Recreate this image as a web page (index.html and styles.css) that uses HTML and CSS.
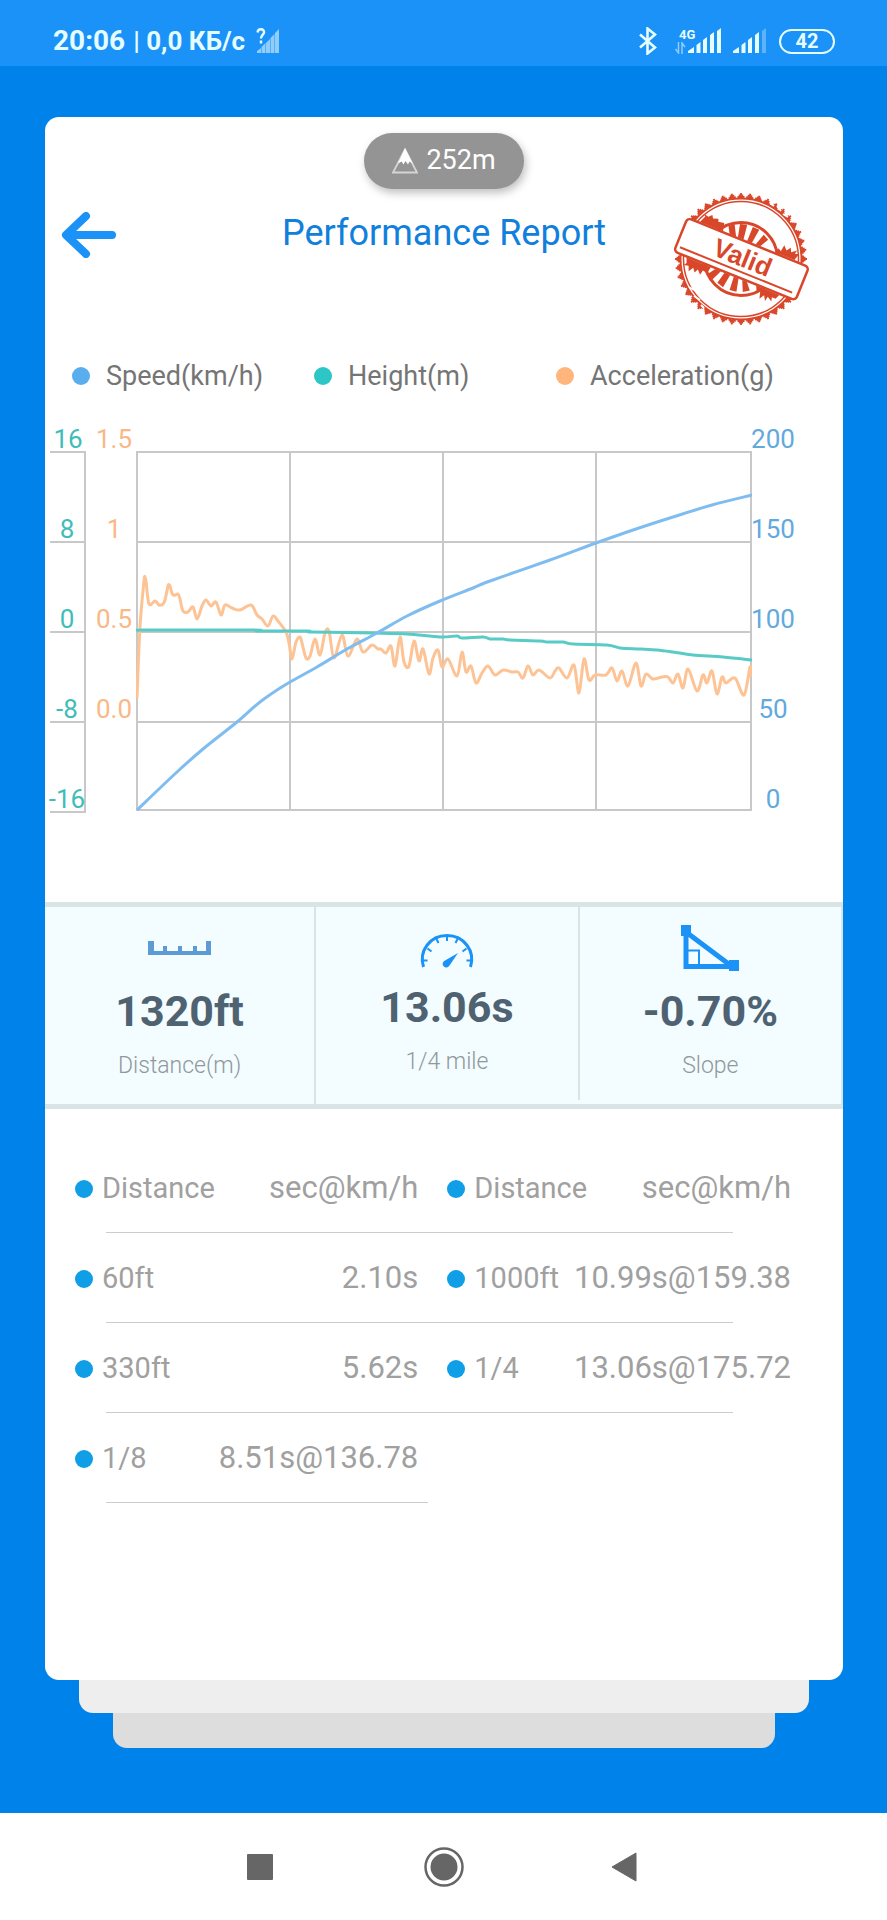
FILE: index.html
```
<!DOCTYPE html>
<html lang="en">
<head>
<meta charset="UTF-8">
<meta name="viewport" content="width=device-width, initial-scale=1.0">
<title>Performance Report</title>
<link rel="stylesheet" href="styles.css">
</head>
<body>
  <div class="statusbar">
    <div class="status-left">
      <span class="clock">20:06</span>
      <span class="traffic">| 0,0 КБ/с</span>
      <svg class="no-sim" width="24" height="26" viewBox="0 0 24 26">
        <path d="M1 25v-2l4-3v5zM5.500 25v-6l4-4v10zM10 25V15l4-4v14zM14.500 25V10l4-4v19zM19 25V5l4-4v24z" fill="#8fcdfb"/>
        <path d="M1.500 4.500C2 0 8.500 0.500 8 4.500C7.500 7 5 7 5 10.500M5 12.500v3" fill="none" stroke="#e6fdff" stroke-width="2.400"/>
      </svg>
    </div>
    <div class="status-right">
      <svg width="18" height="28" viewBox="0 0 18 28">
        <path d="M1 7.500l15 13-7.500 6V1.500l7.500 6L1 20.500" fill="none" stroke="#e6fdff" stroke-width="2.600"/>
      </svg>
      <div class="mobile">
        <div class="mobile-type">
          <span>4G</span>
          <svg width="11" height="12" viewBox="0 0 11 12">
            <path d="M3.500 0v11L0.500 7M7 12V1l3 4" fill="none" stroke="#8fcdfb" stroke-width="1.500"/>
          </svg>
        </div>
        <svg width="34" height="26" viewBox="0 0 34 26">
          <path d="M0 25v-2l6-4v6zM8.500 25v-8l4-3v11zM15 25V12l4-3v16zM22 25V7l4-3v21zM29 25V3l4-3v25z" fill="#e6fdff"/>
        </svg>
      </div>
      <svg width="34" height="26" viewBox="0 0 34 26">
        <path d="M0 25v-2l6-4v6zM8.500 25v-8l4-3v11zM15 25V12l4-3v16zM22 25V7l4-3v21z" fill="#e6fdff"/>
        <path d="M29 25V3l4-3v25z" fill="#5fb4f9"/>
      </svg>
      <span class="battery">42</span>
    </div>
  </div>

  <main>
    <div class="card">
      <div class="altitude">
        <svg width="26" height="26" viewBox="0 0 26 26">
          <path d="M13 1.500L25 24.500H1z" fill="none" stroke="#d5d5d5" stroke-width="1.800"/>
          <path d="M13 0l7.500 15-3-1.500-1.500 3-2.500-3.500-2 3.500-2-3-3.500 2z" fill="#fff"/>
        </svg>
        <span>252m</span>
      </div>

      <header>
        <button class="back" aria-label="Back">
          <svg width="56" height="46" viewBox="0 0 56 46">
            <path d="M25 4L5 23l20 19M7 23h44" fill="none" stroke="#1a92f7" stroke-width="8" stroke-linecap="round" stroke-linejoin="round"/>
          </svg>
        </button>
        <h1>Performance Report</h1>
        <svg class="stamp" width="140" height="140" viewBox="0 0 140 140">
          <g fill="none" stroke="#d9472b">
            <circle cx="70" cy="70" r="62" stroke-width="2" pathLength="440" stroke-dasharray="8 2" stroke-dashoffset="4"/>
            <circle cx="70" cy="70" r="63.500" stroke-width="2" pathLength="440" stroke-dasharray="5 5" stroke-dashoffset="2.500"/>
            <circle cx="70" cy="70" r="65" stroke-width="2" pathLength="440" stroke-dasharray="2 8" stroke-dashoffset="1"/>
            <circle cx="70" cy="70" r="60.500" stroke-width="2"/>
            <circle cx="70" cy="70" r="57.500" stroke-width="1.500"/>
            <circle cx="70" cy="70" r="36.500" stroke-width="3"/>
          </g>
          <g transform="translate(70 70) rotate(22)">
            <g fill="#d9472b">
              <path d="M-20-19l-4-7 5-4 6 11zM-11-19l-3-13 7-2 2 15zM-1-19l0-15 7 0-2 15zM8-19l4-12 6 3-5 9z"/>
              <path d="M-20 19l-5 7 6 4 5-11zM-10 19l-3 12 7 2 2-14zM0 19l1 14 7-1-3-13zM9 19l5 11 6-4-6-7z"/>
              <path d="M-52-19l3-7-2-2 5 1 3-3 2 3 5-2 1 3 6-1 2 8zM29-19l2-5 3 2 1-7 4 4 3-4 2 4 5-4-1 4 4-1-2 7z"/>
              <path d="M-51 19l2 5-2 3 5-1 2 5 3-5 3 4 2-4 4 4 1-5 5 1 1-7zM24 19l3 6 3-2 2 7 3-5 3 5 1-5 5 3-1-4 4 0 2-5z"/>
            </g>
            <rect x="-65" y="-18" width="131" height="36" rx="4" fill="#fff" stroke="#d9472b" stroke-width="2.500"/>
            <path d="M-61 12H60" stroke="#d9472b" stroke-width="2"/>
            <text x="1" y="7" text-anchor="middle" class="stamp-text">Valid</text>
          </g>
          <path d="M99 14l4 3M106 17l4 5M112 25l5 3M18 98l5 3M23 107l6 4M30 116l3 3" stroke="#fff" stroke-width="2"/>
        </svg>
      </header>

      <ul class="legend">
        <li><i class="dot speed"></i>Speed(km/h)</li>
        <li><i class="dot height"></i>Height(m)</li>
        <li><i class="dot accel"></i>Acceleration(g)</li>
      </ul>

      <div class="chart">
        <ul class="scale scale-height">
          <li>16</li>
          <li>8</li>
          <li>0</li>
          <li>-8</li>
          <li>-16</li>
        </ul>
        <ul class="scale scale-accel">
          <li>1.5</li>
          <li>1</li>
          <li>0.5</li>
          <li>0.0</li>
        </ul>
        <svg class="plot" viewBox="0 0 616 360" preserveAspectRatio="none">
          <path class="grid" d="M0 1H616M0 91H616M0 181H616M0 271H616M0 359H616M1 0V360M154 0V360M307 0V360M460 0V360M615 0V360"/>
          <path id="accelLine" class="line-accel"/>
          <path id="heightLine" class="line-height"/>
          <path id="speedLine" class="line-speed"/>
        </svg>
        <ul class="scale scale-speed">
          <li>200</li>
          <li>150</li>
          <li>100</li>
          <li>50</li>
          <li>0</li>
        </ul>
      </div>

      <section class="stats">
        <div class="stat stat-distance">
          <svg width="64" height="48" viewBox="0 0 64 48">
            <path d="M0 17h6v10h9v-5h4v5h11v-5h4v5h11v-5h4v5h9V17h5v14H0z" fill="#5c9bd4"/>
          </svg>
          <strong>1320ft</strong>
          <span>Distance(m)</span>
        </div>
        <div class="stat stat-time">
          <svg width="64" height="48" viewBox="0 0 64 48">
            <path d="M8.500 47C3.500 31 15 15.500 32 15.500S60.500 31 55.500 47" fill="none" stroke="#1a92f7" stroke-width="3"/>
            <path d="M32 16v5M21.500 19l2 4M42.500 19l-2 4M12.500 28.500l4 3M51.500 28.500l-4 3M8 40.500h4.500M56 40.500h-4.500" stroke="#1a92f7" stroke-width="2"/>
            <path d="M43 33L34.500 45.500a3.600 3.600 0 1 1-4.500-5z" fill="#1a92f7"/>
          </svg>
          <strong>13.06s</strong>
          <span>1/4 mile</span>
        </div>
        <div class="stat stat-slope">
          <svg width="64" height="48" viewBox="0 0 64 48">
            <path d="M8 26.500h13v16" fill="none" stroke="#1a92f7" stroke-width="2"/>
            <path d="M8 8v34.500h46z" fill="none" stroke="#1a92f7" stroke-width="5"/>
            <path d="M3 1h10v11H3zM51 36h10v11H51z" fill="#1a92f7"/>
          </svg>
          <strong>-0.70%</strong>
          <span>Slope</span>
        </div>
      </section>

      <table class="splits">
        <tr>
          <th class="name"><i class="dot"></i>Distance</th>
          <th class="value">sec@km/h</th>
          <th class="name"><i class="dot"></i>Distance</th>
          <th class="value">sec@km/h</th>
        </tr>
        <tr>
          <td class="name"><i class="dot"></i>60ft</td>
          <td class="value">2.10s</td>
          <td class="name"><i class="dot"></i>1000ft</td>
          <td class="value">10.99s@159.38</td>
        </tr>
        <tr>
          <td class="name"><i class="dot"></i>330ft</td>
          <td class="value">5.62s</td>
          <td class="name"><i class="dot"></i>1/4</td>
          <td class="value">13.06s@175.72</td>
        </tr>
        <tr class="half">
          <td class="name"><i class="dot"></i>1/8</td>
          <td class="value">8.51s@136.78</td>
          <td></td>
          <td></td>
        </tr>
      </table>
    </div>
    <div class="sheet sheet-1"></div>
    <div class="sheet sheet-2"></div>
  </main>

  <nav>
    <button aria-label="Recent apps">
      <svg width="40" height="40" viewBox="0 0 40 40"><rect x="7" y="7" width="26" height="26" rx="1" fill="#666"/></svg>
    </button>
    <button aria-label="Home">
      <svg width="40" height="40" viewBox="0 0 40 40">
        <circle cx="20" cy="20" r="18.500" fill="none" stroke="#666" stroke-width="2.500"/>
        <circle cx="20" cy="20" r="13.500" fill="#666"/>
      </svg>
    </button>
    <button aria-label="Back">
      <svg width="40" height="40" viewBox="0 0 40 40"><path d="M28 6v28L4 20z" fill="#666" stroke="#666" stroke-linejoin="round"/></svg>
    </button>
  </nav>

  <script>
    const accel = "1,247 4,176 8,130 9,127 10,130 13,153 19,150 23,154 27,153 29,149 32,135 33,134 34,135 37,144 42,143 44,148 47,160 52,161 57,156 61,168 66,155 70,149 75,155 80,151 85,164 89,154 96,157 104,159 115,154 121,164 126,168 132,175 137,165 142,170 150,181 153,192 156,208 160,191 164,186 166,192 170,207 174,205 179,188 184,204 189,182 193,180 198,207 206,184 212,205 221,188 227,201 236,194 242,198 245,198 250,202 255,195 259,215 264,186 268,211 273,215 278,190 283,210 287,198 293,223 297,207 302,199 306,216 312,208 321,225 326,201 330,221 335,215 340,232 346,222 352,215 359,224 367,219 376,221 382,221 387,227 392,215 397,224 403,219 414,227 419,220 423,217 431,227 438,214 443,242 448,208 453,229 459,224 470,224 476,217 481,230 486,220 492,235 500,212 505,235 510,223 517,228 526,226 532,226 537,232 542,223 547,237 552,218 561,240 567,224 571,232 576,220 581,243 586,226 590,232 599,227 608,244 614,216 615,226";
    const height = "1,180 7,179 117,179 122,180 171,180 176,181 237,182 271,183 304,186 321,185 326,187 347,186 354,188 367,188 374,189 404,190 411,191 427,191 437,193 471,194 484,197 504,198 521,199 537,201 557,204 587,206 616,209";
    const speed = "1,359 41,321 67,298 101,271 124,251 149,234 181,216 211,198 241,182 271,165 304,150 337,137 354,130 414,109 460,92 500,78 537,66 576,54 616,44";

    // rounded line through all the points
    function smoothPath(data) {
      const p = data.split(' ').map(s => s.split(',').map(Number));
      let d = 'M' + p[0];
      for (let i = 0; i < p.length - 1; i++) {
        const a = p[i - 1] || p[i];
        const b = p[i];
        const c = p[i + 1];
        const e = p[i + 2] || c;
        d += 'C' + [
          b[0] + (c[0] - a[0]) / 6, b[1] + (c[1] - a[1]) / 6,
          c[0] - (e[0] - b[0]) / 6, c[1] - (e[1] - b[1]) / 6,
          c[0], c[1]
        ];
      }
      return d;
    }

    document.getElementById('accelLine').setAttribute('d', smoothPath(accel));
    document.getElementById('heightLine').setAttribute('d', smoothPath(height));
    document.getElementById('speedLine').setAttribute('d', smoothPath(speed));
  </script>
</body>
</html>
```
FILE: styles.css
```
* {
  box-sizing: border-box;
}
body {
  margin: 0;
  min-height: 100vh;
  display: flex;
  flex-direction: column;
  font-family: Roboto, sans-serif;
  background-color: #0082eb;
}
ul {
  list-style: none;
  margin: 0;
  padding: 0;
}
svg {
  display: block;
}
button {
  padding: 0;
  border: none;
  background: none;
  cursor: pointer;
}

/* status bar */
.statusbar {
  display: flex;
  justify-content: space-between;
  height: 66px;
  padding: 16px 52px 0 53px;
  background-color: #1a92f7;
  color: #e6fdff;
}
.status-left,
.status-right {
  display: flex;
  align-items: center;
  height: 50px;
}
.clock,
.traffic {
  font-size: 28px;
  line-height: 32px;
  font-weight: bold;
}
.traffic {
  font-size: 26px;
  margin-left: 8px;
}
.no-sim {
  margin-left: 11px;
}
.mobile {
  display: flex;
  align-items: flex-end;
  margin: 0 11px 0 18px;
}
.mobile-type {
  font-size: 13px;
  line-height: 14px;
  font-weight: bold;
  margin-right: 2px;
}
.mobile-type span {
  display: block;
  width: 11px;
  padding-left: 4px;
}
.battery {
  width: 56px;
  height: 25px;
  margin-left: 12px;
  border: 2px solid #e6fdff;
  border-radius: 13px;
  font-size: 20px;
  line-height: 21px;
  font-weight: bold;
  text-align: center;
}

/* report card */
main {
  flex: 1;
  display: flex;
  flex-direction: column;
  padding: 51px 44px 65px 45px;
}
.card {
  flex: 1;
  padding-top: 16px;
  background-color: #fff;
  border-radius: 14px;
}
.sheet {
  border-radius: 0 0 14px 14px;
}
.sheet-1 {
  height: 33px;
  margin: 0 34px;
  background-color: #eee;
}
.sheet-2 {
  height: 35px;
  margin: 0 68px;
  background-color: #ddd;
}
.altitude {
  display: flex;
  align-items: center;
  justify-content: center;
  gap: 8px;
  width: 160px;
  height: 56px;
  margin: 0 auto;
  border-radius: 28px;
  background-color: #949494;
  box-shadow: 2px 4px 8px rgba(0, 0, 0, 0.25);
  color: #fff;
  font-size: 27px;
  line-height: 32px;
}
.altitude span {
  padding-bottom: 2px;
}
header {
  display: grid;
  grid-template-columns: 1fr auto 1fr;
  align-items: start;
  padding: 0 16px;
}
.back {
  width: 56px;
  margin-top: 23px;
}
h1 {
  margin: 23px 0 0;
  font-size: 36px;
  line-height: 42px;
  font-weight: normal;
  color: #1080dc;
}
.stamp {
  justify-self: end;
  margin-right: 16px;
}
.stamp-text {
  font-family: "Liberation Sans", sans-serif;
  font-size: 26px;
  font-weight: bold;
  fill: #d9472b;
}

/* legend */
.dot {
  display: inline-block;
  flex: none;
  width: 18px;
  height: 18px;
  border-radius: 50%;
  background-color: #109ee6;
}
.legend {
  display: grid;
  grid-template-columns: repeat(3, 1fr);
  margin-top: 31px;
  padding: 0 45px 0 27px;
  font-size: 27px;
  line-height: 32px;
  color: #757575;
}
.legend li {
  display: flex;
  align-items: center;
  gap: 16px;
}
.dot.speed {
  background-color: #5aaeee;
}
.dot.height {
  background-color: #2cc6c6;
}
.dot.accel {
  background-color: #ffb57c;
}

/* chart */
.chart {
  display: flex;
  margin: 33px 0 89px;
  padding: 0 49px 0 5px;
}
.scale {
  font-size: 26px;
  line-height: 24px;
}
.scale li {
  display: flex;
  align-items: flex-end;
  justify-content: center;
  height: 90px;
  padding-bottom: 2px;
}
.scale li:first-child {
  height: 28px;
}
.scale-height {
  width: 36px;
  color: #3fbdb8;
}
.scale-height li {
  padding-bottom: 0;
  border-bottom: 2px solid #c8c8c8;
  border-right: 2px solid #c8c8c8;
}
.scale-height li:first-child {
  border-right: none;
}
.scale-accel {
  width: 50px;
  padding-left: 6px;
  color: #f9b886;
}
.scale-speed {
  width: 42px;
  color: #62a9de;
}
.plot {
  flex: 1;
  min-width: 0;
  height: 360px;
  margin-top: 26px;
  fill: none;
  stroke-width: 3px;
  stroke-linejoin: round;
}
.grid {
  stroke: #c8c8c8;
  stroke-width: 2px;
}
.line-accel {
  stroke: #fdc394;
}
.line-height {
  stroke: #58cbc7;
}
.line-speed {
  stroke: #7fbdf0;
}

/* summary */
.stats {
  display: flex;
  height: 207px;
  border-top: 5px solid #d9e4e7;
  border-bottom: 5px solid #d9e4e7;
  background-color: #f3fcfe;
}
.stat {
  flex: 1;
  display: flex;
  flex-direction: column;
  align-items: center;
  justify-content: flex-end;
  padding-bottom: 24px;
  border-right: 2px solid #d9e4e7;
}
.stat-distance {
  flex-grow: 1.03;
}
.stat-time {
  margin-bottom: 4px;
}
.stat strong {
  margin: 14px 0 16px;
  font-size: 43px;
  line-height: 50px;
  color: #4f6272;
}
.stat span {
  font-size: 23px;
  line-height: 28px;
  font-weight: 300;
  color: #8f989c;
}

/* splits */
.splits {
  width: calc(100% - 82px);
  margin: 34px 52px 0 30px;
  border-collapse: collapse;
  table-layout: fixed;
  font-size: 29px;
  line-height: 34px;
  color: #a0a0a0;
}
.splits tr {
  height: 90px;
  background: linear-gradient(#ccc, #ccc) no-repeat 31px bottom / calc(100% - 89px) 1px;
}
.splits tr.half {
  background-size: 45% 1px;
}
.splits th,
.splits td {
  padding: 0;
  font-weight: normal;
  white-space: nowrap;
}
.splits .name {
  width: 19%;
  text-align: left;
}
.name .dot {
  margin-right: 9px;
  vertical-align: 0;
}
.splits .value {
  width: 33%;
  font-size: 31px;
  text-align: right;
}
.splits .value:nth-child(2) {
  padding-right: 29px;
}
.splits .name:nth-child(3) {
  width: 17%;
}
.splits .value:nth-child(4) {
  width: 31%;
}

/* system navigation */
nav {
  display: flex;
  align-items: center;
  justify-content: center;
  gap: 144px;
  height: 107px;
  background-color: #fff;
}
```
